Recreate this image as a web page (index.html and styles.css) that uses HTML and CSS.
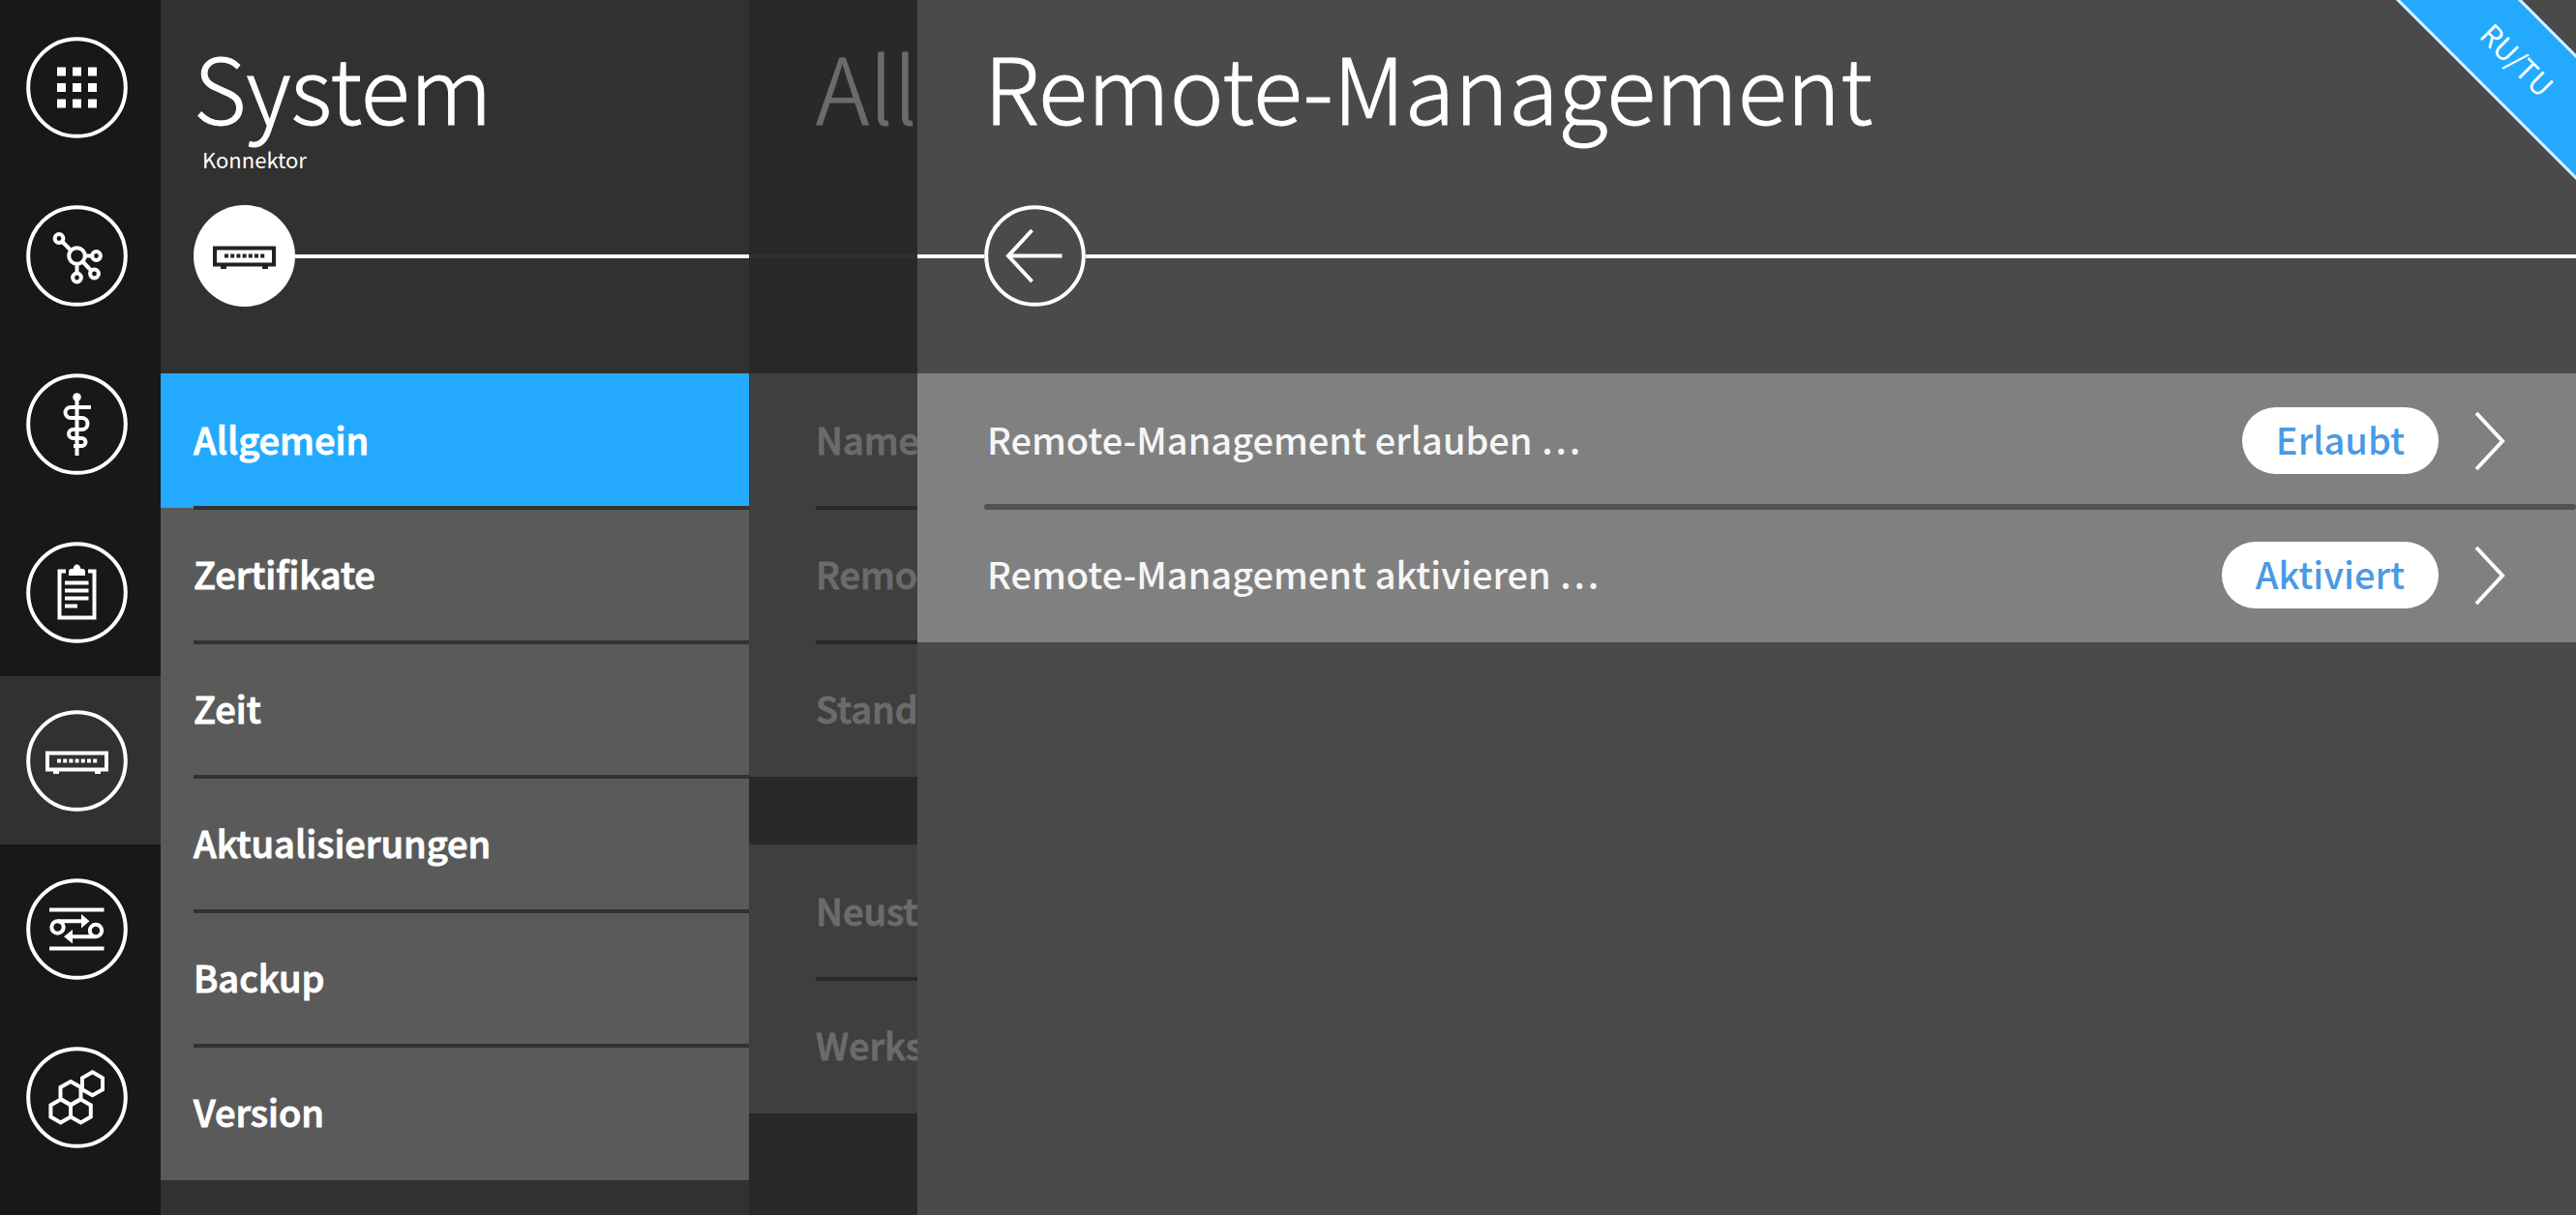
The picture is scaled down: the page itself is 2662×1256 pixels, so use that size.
FILE: index.html
```html
<!DOCTYPE html>
<html lang="de">
<head>
  <meta charset="utf-8">
  <title>Remote-Management</title>
  <link rel="stylesheet" href="styles.css">
</head>
<body>
  <div class="app">
    <nav class="rail" aria-label="Hauptnavigation">
      <a class="rail-item" href="#start" aria-label="Start">
        <svg class="icon" viewBox="0 0 105 105">
          <circle class="ring" cx="52.5" cy="52.5" r="50.3"/>
          <path class="solid" d="M32 31.500h9v9h-9zM48 31.500h9v9h-9zM64 31.500h9v9h-9zM32 48h9v9h-9zM48 48h9v9h-9zM64 48h9v9h-9zM32 64.500h9v9h-9zM48 64.500h9v9h-9zM64 64.500h9v9h-9z"/>
        </svg>
      </a>
      <a class="rail-item" href="#netzwerk" aria-label="Netzwerk">
        <svg class="icon" viewBox="0 0 105 105">
          <circle class="ring" cx="52.5" cy="52.5" r="50.3"/>
          <g class="line">
            <circle cx="52.5" cy="52.5" r="8.300"/>
            <circle cx="34" cy="34.5" r="4.400"/>
            <circle cx="72.500" cy="52.5" r="4.400"/>
            <circle cx="70.500" cy="71" r="4.400"/>
            <circle cx="52.5" cy="75" r="4.400"/>
            <path d="M37 37.500l9.500 9.500M61 52.500h7M58.500 58.500l9 9.500M52.500 61v9.500"/>
          </g>
        </svg>
      </a>
      <a class="rail-item" href="#praxis" aria-label="Praxis">
        <svg class="icon" viewBox="0 0 105 105">
          <circle class="ring" cx="52.5" cy="52.5" r="50.3"/>
          <circle class="solid" cx="52.5" cy="24.500" r="4.300"/>
          <path class="line" d="M52.500 24v61M67 35H46a5.500 5.500 0 0 0 0 11H57.500a6 6 0 0 1 0 12H48.500a4.500 4.500 0 0 0 0 9H57.500a4 4 0 0 1 0 8H49"/>
        </svg>
      </a>
      <a class="rail-item" href="#protokoll" aria-label="Protokoll">
        <svg class="icon" viewBox="0 0 105 105">
          <circle class="ring" cx="52.5" cy="52.5" r="50.3"/>
          <path class="line" d="M41 30.500H34.500V78.500H70.500V30.500H64M40 42.500H64.500M40 50.500H64.500M40 58.500H64.500M40 66.500H53"/>
          <path class="solid" d="M44 35V31q0-3 3-3h1.500q1-4.500 4-4.500t4 4.500H58q3 0 3 3v4z"/>
        </svg>
      </a>
      <a class="rail-item is-active" href="#system" aria-label="System" aria-current="page">
        <svg class="icon" viewBox="0 0 105 105">
          <circle class="ring" cx="52.5" cy="52.5" r="50.3"/>
          <path class="line" d="M22 44.500H83V61.500H22z"/>
          <path class="solid" d="M28 63h6v3h-6zM71 63h6v3h-6z"/>
          <path class="line dots" d="M32 52.500H73.500"/>
        </svg>
      </a>
      <a class="rail-item" href="#verbindungen" aria-label="Verbindungen">
        <svg class="icon" viewBox="0 0 105 105">
          <circle class="ring" cx="52.5" cy="52.5" r="50.3"/>
          <g class="line">
            <circle cx="32.500" cy="50.500" r="6.200"/>
            <circle cx="72" cy="54" r="6.200"/>
            <path d="M24 32.500H80.500M24 72.500H80.500M32.500 44.300H59M72 60.200H47"/>
          </g>
          <path class="solid" d="M57 37l8.500 7.300-8.500 7.300zM48 53v14.500L39 60.200z"/>
        </svg>
      </a>
      <a class="rail-item" href="#module" aria-label="Module">
        <svg class="icon" viewBox="0 0 105 105">
          <circle class="ring" cx="52.5" cy="52.5" r="50.3"/>
          <path class="line" d="M68.500 26.300l10.500 6v12l-10.500 6-10.500-6v-12zM46 36l10.500 6v12L46 60l-10.500-6v-12zM35.700 54.500l10.300 6v12l-10.300 6-10.300-6v-12zM56.500 54.500l10.300 6v12l-10.300 6-10.500-6v-12z"/>
        </svg>
      </a>
    </nav>

    <aside class="panel side">
      <header class="head">
        <div class="titles">
          <h1 class="title">System</h1>
          <p class="subtitle">Konnektor</p>
        </div>
        <div class="track">
          <svg class="icon badge-icon" viewBox="0 0 105 105">
            <circle class="disc" cx="52.5" cy="52.5" r="52.5"/>
            <path class="line" d="M22 44.500H83V61.500H22z"/>
            <path class="solid" d="M28 63h6v3h-6zM71 63h6v3h-6z"/>
            <path class="line dots" d="M32 52.500H73.500"/>
          </svg>
          <span class="rule"></span>
        </div>
      </header>
      <nav class="list" aria-label="System">
        <a class="row is-active" href="#allgemein" aria-current="page"><span class="label">Allgemein</span></a>
        <a class="row" href="#zertifikate"><span class="label">Zertifikate</span></a>
        <a class="row" href="#zeit"><span class="label">Zeit</span></a>
        <a class="row" href="#aktualisierungen"><span class="label">Aktualisierungen</span></a>
        <a class="row" href="#backup"><span class="label">Backup</span></a>
        <a class="row" href="#version"><span class="label">Version</span></a>
      </nav>
    </aside>

    <section class="panel under">
      <header class="head">
        <div class="titles">
          <h2 class="title">All</h2>
        </div>
        <div class="track"><span class="rule"></span></div>
      </header>
      <div class="groups">
        <div class="list">
          <div class="row"><span class="label">Name</span></div>
          <div class="row"><span class="label">Remo</span></div>
          <div class="row"><span class="label">Stand</span></div>
        </div>
        <div class="list">
          <div class="row"><span class="label">Neust</span></div>
          <div class="row"><span class="label">Werks</span></div>
        </div>
      </div>
    </section>

    <main class="panel main">
      <header class="head">
        <div class="titles">
          <h2 class="title">Remote-Management</h2>
        </div>
        <div class="track">
          <span class="rule lead"></span>
          <button class="back" type="button" aria-label="Zurück">
            <svg class="icon" viewBox="0 0 105 105">
              <circle class="ring" cx="52.5" cy="52.5" r="50.3"/>
              <path class="line" d="M80.500 52.500H25M49.500 26L25 52.500 49.500 79"/>
            </svg>
          </button>
          <span class="rule"></span>
        </div>
      </header>
      <div class="list">
        <a class="row" href="#erlauben">
          <span class="label">Remote-Management erlauben …</span>
          <span class="pill">Erlaubt</span>
          <svg class="chevron" viewBox="0 0 32 62"><path class="line" d="M2 2L29 31 2 60"/></svg>
        </a>
        <a class="row" href="#aktivieren">
          <span class="label">Remote-Management aktivieren …</span>
          <span class="pill">Aktiviert</span>
          <svg class="chevron" viewBox="0 0 32 62"><path class="line" d="M2 2L29 31 2 60"/></svg>
        </a>
      </div>
      <div class="ribbon">RU/TU</div>
    </main>
  </div>
</body>
</html>
```
FILE: styles.css
```css
* {
  box-sizing: border-box;
}

body {
  margin: 0;
  background: #4a4a4a;
  color: #fff;
  font-family: "Noto Sans CJK SC", "Noto Sans", sans-serif;
  font-size: 38px;
}

a {
  color: inherit;
  text-decoration: none;
}

.app {
  display: flex;
  min-height: 100vh;
}

/* icon rail */

.rail {
  flex: none;
  width: 166px;
  padding-top: 3px;
  background: #181818;
}

.rail-item {
  display: flex;
  align-items: center;
  height: 174px;
  padding-left: 27px;
}

.rail-item.is-active {
  background: #313131;
}

.icon {
  display: block;
  flex: none;
  width: 105px;
  height: 105px;
}

.ring,
.line {
  fill: none;
  stroke: #fff;
  stroke-width: 4;
}

.solid,
.disc {
  fill: #fff;
}

.dots {
  stroke-dasharray: 4 2.2;
}

.badge-icon .line {
  stroke: #222;
}

.badge-icon .solid {
  fill: #222;
}

/* panels */

.panel {
  overflow: hidden;
}

.head {
  padding: 30px 0 69px;
}

.titles {
  min-height: 182px;
}

.title {
  margin: 0;
  font-size: 94px;
  font-weight: 300;
  line-height: 116px;
  white-space: nowrap;
  -webkit-text-stroke: 1px currentColor;
}

.subtitle {
  margin: 4px 0 0;
  padding-left: 9px;
  font-size: 22px;
  line-height: 28px;
}

.track {
  display: flex;
  align-items: center;
  height: 105px;
}

.rule {
  flex: 1;
  height: 4px;
  background: #fff;
}

.row {
  position: relative;
  display: flex;
  align-items: center;
}

.row + .row::before {
  content: "";
  position: absolute;
  top: -2px;
  right: 0;
  left: 0;
  height: 4px;
}

.label {
  padding: 38px 0 42px;
  font-weight: 500;
  line-height: 59px;
  white-space: nowrap;
}

.side {
  flex: none;
  width: 608px;
  background: #313131;
}

.side .titles,
.side .track,
.side .row {
  padding-left: 34px;
}

.side .row {
  background: #5a5a5a;
}

.side .row.is-active {
  background: #23aaff;
}

.side .row + .row::before {
  left: 34px;
  background: #323232;
}

.side .label,
.under .label {
  -webkit-text-stroke: 1px currentColor;
}

.under {
  flex: none;
  width: 174px;
  background: #292929;
  color: #6b6b6b;
}

.under .titles,
.under .row {
  padding-left: 69px;
}

.under .rule {
  background: #303030;
}

.groups {
  display: grid;
  gap: 70px;
}

.under .row {
  background: #3f3f3f;
}

.under .row + .row::before {
  left: 69px;
  background: #292929;
}

.main {
  position: relative;
  flex: 1;
  background: #4a4a4a;
}

.main .titles {
  padding-left: 69px;
}

.rule.lead {
  flex: none;
  width: 69px;
}

.back {
  padding: 0;
  border: 0;
  background: none;
}

.main .row {
  padding: 0 73px 0 72px;
  background: #808080;
  color: #f6f6f6;
}

.main .row + .row::before {
  top: -4px;
  left: 69px;
  height: 6px;
  border-radius: 3px;
  background: #535353;
}

.pill {
  margin-left: auto;
  padding: 0 35px 4px;
  border-radius: 35px;
  background: #fff;
  color: #4a99e4;
  font-weight: 500;
  line-height: 65px;
}

.chevron {
  width: 32px;
  height: 62px;
  margin-left: 37px;
}

/* corner ribbon */

.ribbon {
  position: absolute;
  top: 15px;
  right: -140px;
  width: 400px;
  border: solid #d5eeff;
  border-width: 3px 0;
  background: #23aaff;
  font-size: 30px;
  line-height: 86px;
  text-align: center;
  transform: rotate(45deg);
}
```
